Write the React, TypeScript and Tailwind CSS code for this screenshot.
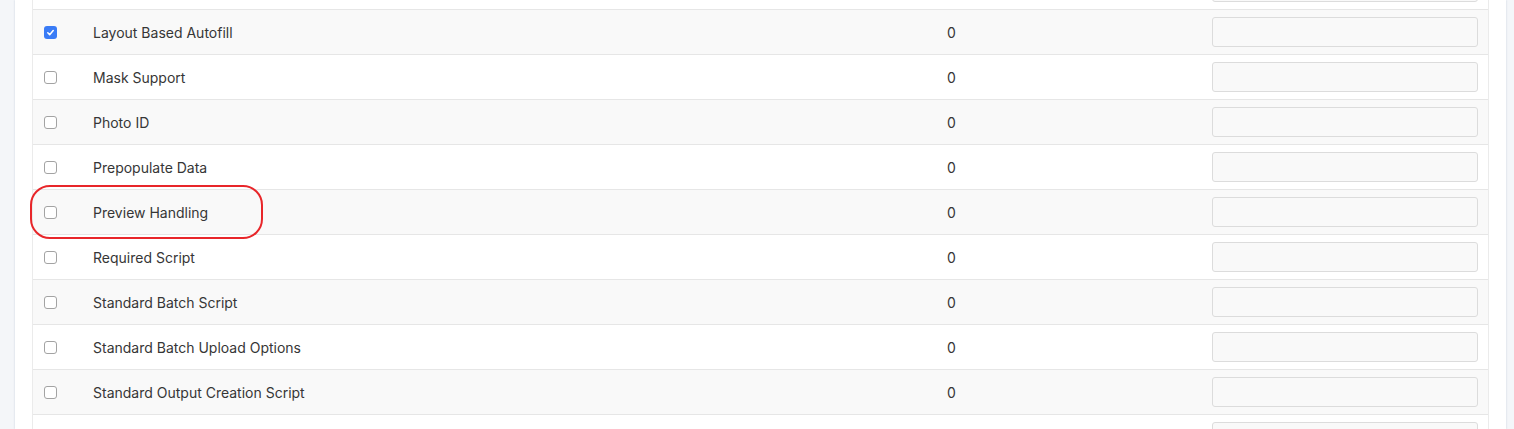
import React from 'react';

type Row = { label: string; value: string; checked?: boolean };

// first and last rows are scrolled mostly out of view
const ROWS: Row[] = [
  { label: '', value: '' },
  { label: 'Layout Based Autofill', value: '0', checked: true },
  { label: 'Mask Support', value: '0' },
  { label: 'Photo ID', value: '0' },
  { label: 'Prepopulate Data', value: '0' },
  { label: 'Preview Handling', value: '0' },
  { label: 'Required Script', value: '0' },
  { label: 'Standard Batch Script', value: '0' },
  { label: 'Standard Batch Upload Options', value: '0' },
  { label: 'Standard Output Creation Script', value: '0' },
  { label: '', value: '' },
];

function Check({ checked }: { checked?: boolean }) {
  if (checked) {
    return (
      <span className="flex h-[13px] w-[13px] items-center justify-center rounded-[3px] bg-[#3a7cf6]">
        <svg width="9" height="9" viewBox="0 0 10 10" fill="none">
          <path d="M2 5.3 4.1 7.4 8 2.8" stroke="white" strokeWidth="1.7" strokeLinecap="round" strokeLinejoin="round" />
        </svg>
      </span>
    );
  }
  return <span className="block h-[13px] w-[13px] rounded-[3px] border border-[#a3a3a3] bg-white" />;
}

export default function App() {
  return (
    <div className="h-[429px] overflow-hidden bg-[#f4f6f9] pl-[15px] pr-[8px] font-['Inter','Liberation_Sans',sans-serif] text-[14px] text-[#363636]">
      <div className="relative flex h-full flex-col overflow-hidden bg-white px-[17px] shadow-[0_0_2px_rgba(120,140,170,0.35)]">
        <div className="-mt-[35px] shrink-0 border-x border-[#ebebeb]">
          {ROWS.map((r, i) => (
            <div
              key={i}
              className={`grid h-[45px] grid-cols-[48px_854px_265px_1fr] items-center border-b border-[#e6e6e6] ${
                i % 2 === 1 ? 'bg-[#f9f9f9]' : 'bg-white'
              }`}
            >
              <div className="flex pl-[11px]">
                <Check checked={r.checked} />
              </div>
              <div className="pl-[12px]">{r.label}</div>
              <div className="pl-[12px]">{r.value}</div>
              <div className="pl-[12px] pr-[10px]">
                <div className="h-[30px] rounded-[3px] border border-[#dcdcdc] bg-[#f9f9f9]" />
              </div>
            </div>
          ))}
        </div>
        {/* highlight ring around the Preview Handling row */}
        <div className="absolute left-[15px] top-[185px] h-[54px] w-[233px] rounded-[20px] border-[2.5px] border-[#e8262a]" />
      </div>
    </div>
  );
}
